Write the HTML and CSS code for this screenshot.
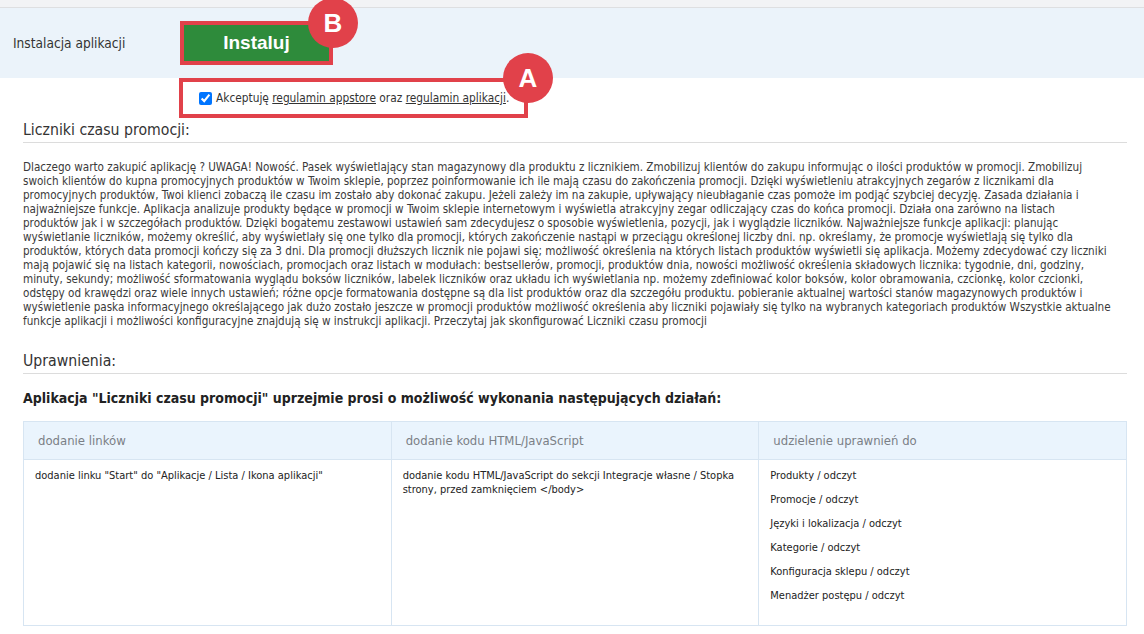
FILE: index.html
```html
<!DOCTYPE html>
<html lang="pl">
  <head>
    <meta charset="UTF-8" />
    <meta name="viewport" content="width=device-width, initial-scale=1.0" />
    <title>Liczniki czasu promocji</title>
    <link rel="stylesheet" href="styles.css">
  </head>
  <body>
    <div class="topbar"></div>
    <div class="install-row">
      <div class="install-label">Instalacja aplikacji</div>
      <div class="marked install-box">
        <button class="btn-install">Instaluj</button>
        <span class="badge badge-b">B</span>
      </div>
    </div>
    <div class="terms-row">
      <label class="marked terms">
        <input type="checkbox" checked>
        <span>Akceptuję <a href="#">regulamin appstore</a> oraz <a href="#">regulamin aplikacji</a>.</span>
        <span class="badge badge-a">A</span>
      </label>
    </div>

    <div class="content">
      <h2 class="section-title">Liczniki czasu promocji:</h2>
      <p class="description">Dlaczego warto zakupić aplikację ? UWAGA! Nowość. Pasek wyświetlający stan magazynowy dla produktu z licznikiem. Zmobilizuj klientów do zakupu informując o ilości produktów w promocji. Zmobilizuj<br>
        swoich klientów do kupna promocyjnych produktów w Twoim sklepie, poprzez poinformowanie ich ile mają czasu do zakończenia promocji. Dzięki wyświetleniu atrakcyjnych zegarów z licznikami dla<br>
        promocyjnych produktów, Twoi klienci zobaczą ile czasu im zostało aby dokonać zakupu. Jeżeli zależy im na zakupie, upływający nieubłaganie czas pomoże im podjąć szybciej decyzję. Zasada działania i<br>
        najważniejsze funkcje. Aplikacja analizuje produkty będące w promocji w Twoim sklepie internetowym i wyświetla atrakcyjny zegar odliczający czas do końca promocji. Działa ona zarówno na listach<br>
        produktów jak i w szczegółach produktów. Dzięki bogatemu zestawowi ustawień sam zdecydujesz o sposobie wyświetlenia, pozycji, jak i wyglądzie liczników. Najważniejsze funkcje aplikacji: planując<br>
        wyświetlanie liczników, możemy określić, aby wyświetlały się one tylko dla promocji, których zakończenie nastąpi w przeciągu określonej liczby dni. np. określamy, że promocje wyświetlają się tylko dla<br>
        produktów, których data promocji kończy się za 3 dni. Dla promocji dłuższych licznik nie pojawi się; możliwość określenia na których listach produktów wyświetli się aplikacja. Możemy zdecydować czy liczniki<br>
        mają pojawić się na listach kategorii, nowościach, promocjach oraz listach w modułach: bestsellerów, promocji, produktów dnia, nowości możliwość określenia składowych licznika: tygodnie, dni, godziny,<br>
        minuty, sekundy; możliwość sformatowania wyglądu boksów liczników, labelek liczników oraz układu ich wyświetlania np. możemy zdefiniować kolor boksów, kolor obramowania, czcionkę, kolor czcionki,<br>
        odstępy od krawędzi oraz wiele innych ustawień; różne opcje formatowania dostępne są dla list produktów oraz dla szczegółu produktu. pobieranie aktualnej wartości stanów magazynowych produktów i<br>
        wyświetlenie paska informacyjnego określającego jak dużo zostało jeszcze w promocji produktów możliwość określenia aby liczniki pojawiały się tylko na wybranych kategoriach produktów Wszystkie aktualne<br>
        funkcje aplikacji i możliwości konfiguracyjne znajdują się w instrukcji aplikacji. Przeczytaj jak skonfigurować Liczniki czasu promocji</p>

      <h2 class="section-title perms-title">Uprawnienia:</h2>
      <h3 class="perms-intro">Aplikacja "Liczniki czasu promocji" uprzejmie prosi o możliwość wykonania następujących działań:</h3>

      <table class="perms">
        <thead>
          <tr>
            <th>dodanie linków</th>
            <th>dodanie kodu HTML/JavaScript</th>
            <th>udzielenie uprawnień do</th>
          </tr>
        </thead>
        <tbody>
          <tr>
            <td>dodanie linku "Start" do "Aplikacje / Lista / Ikona aplikacji"</td>
            <td>dodanie kodu HTML/JavaScript do sekcji Integracje własne / Stopka strony, przed zamknięciem &lt;/body&gt;</td>
            <td>
              <div class="perm">Produkty / odczyt</div>
              <div class="perm">Promocje / odczyt</div>
              <div class="perm">Języki i lokalizacja / odczyt</div>
              <div class="perm">Kategorie / odczyt</div>
              <div class="perm">Konfiguracja sklepu / odczyt</div>
              <div class="perm">Menadżer postępu / odczyt</div>
            </td>
          </tr>
        </tbody>
      </table>
    </div>
  </body>
</html>
```

FILE: styles.css
```css
* {
  box-sizing: border-box;
}
body {
  margin: 0;
  background: #fff;
  color: #333;
  font-family: "DejaVu Sans Condensed", "DejaVu Sans", sans-serif;
  font-stretch: condensed;
  font-size: 11px;
}
.topbar {
  height: 8px;
  background: #f2f3f5;
  border-bottom: 1px solid #dedfe1;
}
.install-row {
  display: flex;
  align-items: center;
  height: 70px;
  background: #ebf3fa;
}
.install-label {
  width: 180px;
  padding-left: 13px;
  font-size: 13.6px;
  color: #333;
}
.marked {
  position: relative;
  border: 4px solid #e1414a;
}
.install-box {
  width: 153px;
  height: 44px;
}
.btn-install {
  display: block;
  width: 100%;
  height: 100%;
  border: 0;
  background: #2e8b3b;
  color: #fff;
  font-family: "Liberation Sans", Arial, sans-serif;
  font-weight: bold;
  font-size: 19px;
  cursor: pointer;
}
.badge {
  position: absolute;
  width: 50px;
  height: 50px;
  border-radius: 50%;
  background: #e1414a;
  color: #fff;
  font-family: "Liberation Sans", Arial, sans-serif;
  font-weight: bold;
  font-size: 26px;
  line-height: 50px;
  text-align: center;
}
.badge-b {
  left: 124px;
  top: -27px;
}
.badge-a {
  left: 320px;
  top: -29px;
}
.terms-row {
  padding-left: 179px;
}
.terms {
  display: flex;
  align-items: center;
  width: 349px;
  height: 40px;
  padding-left: 16px;
  font-size: 11.8px;
}
.terms input {
  width: 13px;
  height: 13px;
  margin: 0 4px 0 0;
}
.terms a {
  color: #333;
  text-decoration: underline;
}
.content {
  width: 1104px;
  margin-left: 23px;
}
.section-title {
  margin: 2px 0 0;
  padding-bottom: 2px;
  font-weight: normal;
  font-size: 15.7px;
  line-height: 20px;
  color: #333;
  border-bottom: 1px solid #dcdcdc;
}
.description {
  margin: 17px 0 0;
  font-size: 11.6px;
  line-height: 14px;
  color: #3a3a3a;
}
.perms-title {
  margin-top: 23px;
}
.perms-intro {
  margin: 15px 0 0;
  font-size: 14px;
  line-height: 18px;
  color: #222;
}
.perms {
  width: 100%;
  margin-top: 14px;
  border-collapse: collapse;
  table-layout: fixed;
}
.perms th,
.perms td {
  border: 1px solid #d7e5f2;
  text-align: left;
  vertical-align: top;
}
.perms th {
  height: 38px;
  padding: 0 14px;
  background: #eaf4fd;
  color: #7a7f86;
  font-weight: normal;
  font-size: 13px;
  vertical-align: middle;
}
.perms td {
  padding: 9px 11px 12px;
  font-size: 11px;
  line-height: 14px;
  color: #222;
}
.perm {
  margin-bottom: 10px;
}
```
